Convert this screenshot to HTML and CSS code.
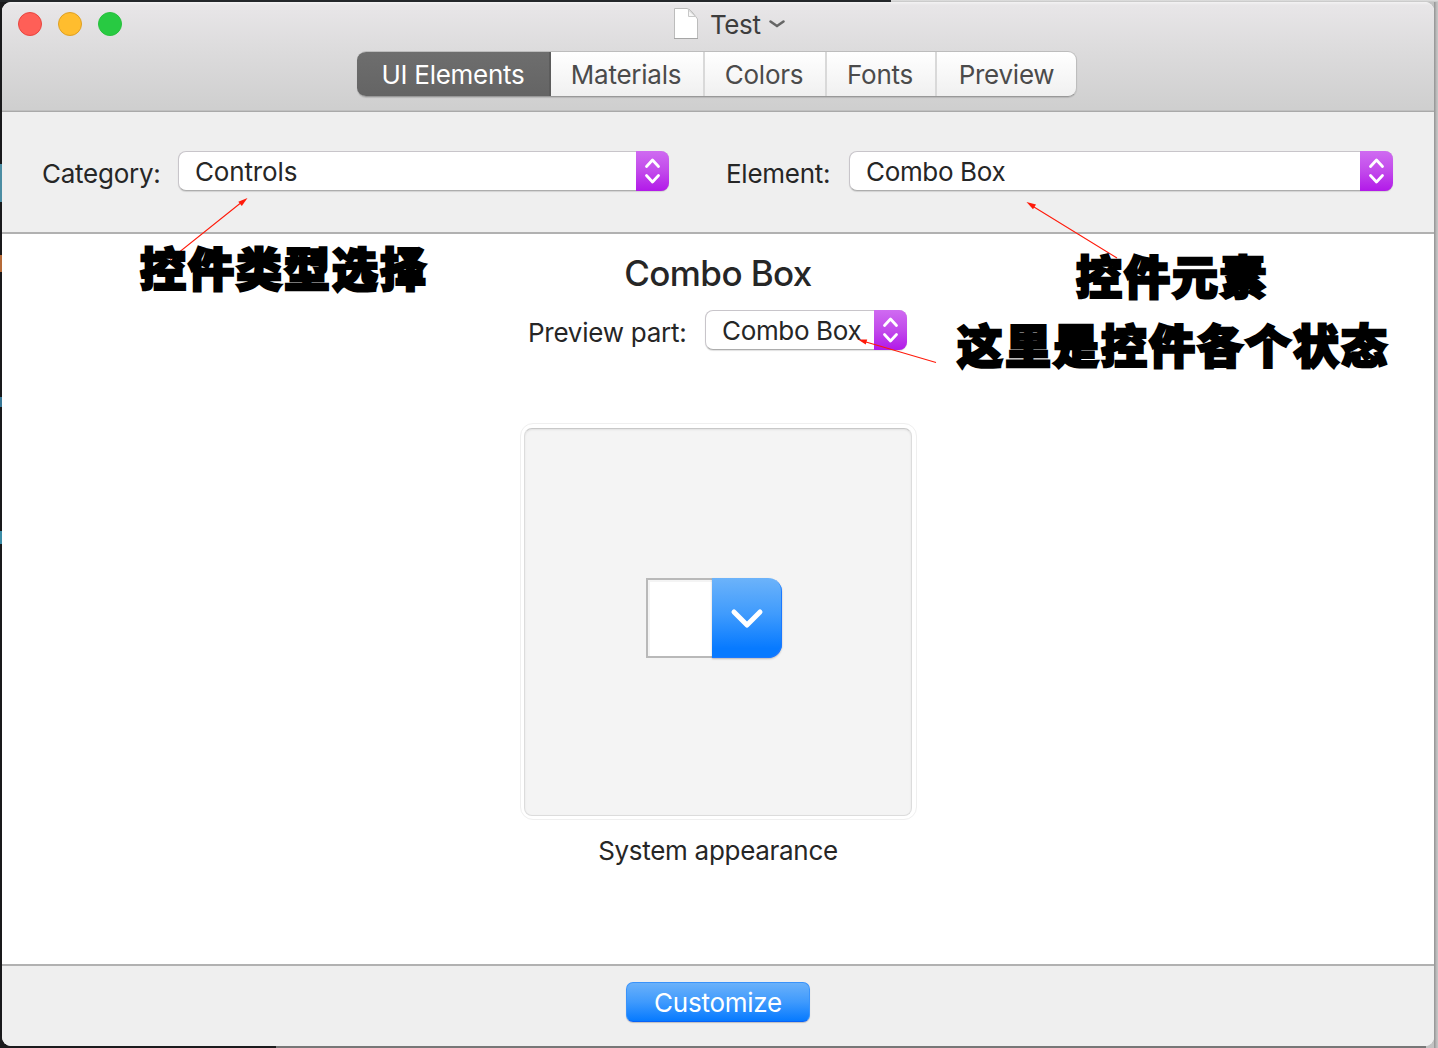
FILE: index.html
```html
<!DOCTYPE html>
<html lang="en">
<head>
<meta charset="utf-8">
<title>Test</title>
<link rel="stylesheet" href="styles.css">
</head>
<body>
<div class="window">
  <header class="toolbar">
    <div class="titlebar">
      <div class="lights"><i class="light close"></i><i class="light minimize"></i><i class="light zoom"></i></div>
      <div class="title">
        <svg class="doc" width="26" height="33" viewBox="0 0 26 33"><path d="M1.500 1.500H14Q17 2 20 6T24.500 12V31.500H1.500Z" fill="#fff" stroke="#bcbcbc"/><path d="M15.500 3V9.500H22.500Z" fill="#f6f6f6" stroke="#c8c8c8"/><path d="M1 31.500H25" stroke="#a6a6a6"/></svg>
        <span class="title-text">Test</span>
        <svg class="title-chevron" width="18" height="10" viewBox="0 0 18 10"><path d="M2.500 2.500L9 7L15.500 2.500" fill="none" stroke="#666" stroke-width="2.600" stroke-linecap="round"/></svg>
      </div>
    </div>
    <nav class="segments">
      <span class="segment selected"><b>UI Elements</b></span>
      <span class="segment materials"><b>Materials</b></span>
      <span class="segment colors"><b>Colors</b></span>
      <span class="segment fonts"><b>Fonts</b></span>
      <span class="segment preview"><b>Preview</b></span>
    </nav>
  </header>

  <section class="filters">
    <span class="label category-label">Category:</span>
    <div class="popup category"><span class="value controls">Controls</span><span class="stepper"><svg width="33" height="40" viewBox="0 0 33 40"><path d="M10.500 15.500L16.500 9L22.500 15.500M10.500 24.500L16.500 31L22.500 24.500"/></svg></span></div>
    <span class="label element-label">Element:</span>
    <div class="popup element"><span class="value">Combo Box</span><span class="stepper"><svg width="33" height="40" viewBox="0 0 33 40"><path d="M10.500 15.500L16.500 9L22.500 15.500M10.500 24.500L16.500 31L22.500 24.500"/></svg></span></div>
  </section>

  <main class="content">
    <h1 class="heading">Combo Box</h1>
    <div class="part-row">
      <span class="label part-label">Preview part:</span>
      <div class="popup part"><span class="value">Combo Box</span><span class="stepper"><svg width="33" height="40" viewBox="0 0 33 40"><path d="M10.500 15.500L16.500 9L22.500 15.500M10.500 24.500L16.500 31L22.500 24.500"/></svg></span></div>
    </div>
    <div class="well-frame">
      <div class="well">
        <div class="combo"><div class="combo-field"></div><div class="combo-button"><svg width="70" height="80" viewBox="0 0 70 80"><path d="M22 34L35 47L48 34" fill="none" stroke="#fff" stroke-width="5" stroke-linecap="round" stroke-linejoin="round"/></svg></div></div>
      </div>
    </div>
    <p class="caption">System appearance</p>
  </main>

  <footer class="footer"><button class="customize">Customize</button></footer>
</div>

<svg class="arrows" width="1438" height="1048" viewBox="0 0 1438 1048">
  <g stroke="#ff1a0a" stroke-width="1.100"><path d="M170 259.500L240 203.500M1117 258L1034 207M936 362.500L866 342"/></g>
  <g fill="#ff1a0a"><path d="M247.500 198L241.800 206L238.300 201.800Z"/><path d="M1026.500 202L1036 204.500L1033 209.300Z"/><path d="M858 339.500L867.200 339.500L865.700 344.500Z"/></g>
</svg>
<div class="note note-category" lang="zh">控件类型选择</div>
<div class="note note-element" lang="zh">控件元素</div>
<div class="note note-state" lang="zh">这里是控件各个状态</div>
</body>
</html>
```
FILE: styles.css
```css
* { box-sizing: border-box; }
body {
  margin: 0;
  padding: 2px 4px 2px 2px;
  width: 1438px;
  height: 1048px;
  overflow: hidden;
  position: relative;
  font-family: Inter, "Liberation Sans", sans-serif;
  font-size: 26px;
  letter-spacing: -0.260px;
  color: #262626;
  background:
    linear-gradient(#24272a, #24272a) 0 0 / 891px 2px no-repeat,
    linear-gradient(#e2e2e2, #c4c4c4) 891px 0 / 547px 2px no-repeat,
    linear-gradient(#1b1b1d, #1b1b1d) 0 1036px / 276px 12px no-repeat,
    linear-gradient(#777, #777) 276px 1046px / 1150px 2px no-repeat,
    linear-gradient(transparent 164px, #4c8da3 164px 202px, transparent 202px 255px, #b56a38 255px 272px, transparent 272px 397px, #377795 397px 407px, transparent 407px 531px, #3b8ca6 531px 544px, transparent 544px) 0 0 / 2px 1048px no-repeat,
    linear-gradient(#19191b, #19191b) 0 0 / 20px 1048px no-repeat,
    linear-gradient(90deg, #929292, #c3c3c3 3px) 1434px 0 / 4px 1048px no-repeat,
    #c3c3c3;
}
.window {
  width: 1432px;
  height: 1044px;
  border-radius: 9px;
  overflow: hidden;
  display: flex;
  flex-direction: column;
  background: #fff;
}
.toolbar {
  height: 110px;
  background: linear-gradient(#f4f3f4, #e8e6e8 3px, #dcdbdc 50px, #cfcfcf 106px);
  border-bottom: 1px solid #a9a9a9;
  box-shadow: inset 0 -1px #c0c0c0;
}
.titlebar { height: 49px; display: flex; align-items: flex-start; padding: 10px 0 0 16px; }
.lights { display: flex; gap: 16px; width: 104px; }
.light { width: 24px; height: 24px; border-radius: 50%; border: 1px solid; }
.close { background: #ff5f57; border-color: #e9453f; }
.minimize { background: #ffbd2e; border-color: #dfa023; }
.zoom { background: #28ca42; border-color: #27c13c; }
.title { display: flex; align-items: center; margin: -5px 0 0 551px; height: 34px; }
.doc { margin-top: -2px; }
.title-text { width: 58px; margin-left: 11px; color: #3d3d3d; letter-spacing: -0.400px; line-height: 34px; padding-top: 1px; }
.segments {
  display: flex;
  width: 720px;
  height: 46px;
  margin-left: 355px;
  border: 1px solid #bdbdbd;
  border-bottom-color: #999;
  border-left: 0;
  border-radius: 9px;
  overflow: hidden;
  background: linear-gradient(#fff, #f0f0f0);
  box-shadow: 0 1px 1px rgba(0,0,0,.12);
}
.segment { display: flex; align-items: center; justify-content: center; border-left: 2px solid #d9d9d9; color: #4b4b4b; }
.segment b { font-weight: 420; white-space: nowrap; letter-spacing: -0.260px; }
.materials b, .colors b, .fonts b { margin-right: 2px; }
.selected { width: 194px; margin: -1px 0; border-right: 2px solid #5c5c5c; border-left: 0; background: linear-gradient(#6e6e6e, #646464); color: #fff; }
.materials { width: 152px; border-left: 0; }
.colors { width: 122px; }
.fonts { width: 110px; }
.preview { flex: 1; }

.filters { height: 122px; display: flex; padding: 39px 41px 0 40px; background: #efefef; border-bottom: 2px solid #b1b1b1; }
.label { line-height: 40px; margin-top: 3px; white-space: nowrap; }
.category-label { width: 136px; }
.element-label { width: 123px; margin-left: 57px; }
.popup {
  height: 40px;
  display: flex;
  justify-content: space-between;
  background: #fff;
  border: 1px solid #c8c5ca;
  border-bottom: 1px solid #adadad;
  border-radius: 8px;
  box-shadow: 0 1px 1px rgba(0,0,0,.12);
}
.value { padding-left: 16px; line-height: 40px; white-space: nowrap; letter-spacing: -0.350px; }
.controls { letter-spacing: -0.150px; }
.stepper { display: block; height: 40px; width: 33px; margin: -1px -1px 0 0; border-radius: 0 8px 8px 0; background: linear-gradient(#cf6bf1, #c24aeb 50%, #b219e9); }
.stepper svg { display: block; }
.stepper path { fill: none; stroke: #fff; stroke-width: 2.800; stroke-linecap: round; stroke-linejoin: round; }
.category { width: 491px; }
.element { width: 544px; }

.content { height: 730px; display: flex; flex-direction: column; align-items: center; }
.heading { margin: 18px 0 0; height: 42px; line-height: 42px; font-size: 35px; font-weight: 540; letter-spacing: -0.600px; }
.part-row { display: flex; width: 380px; margin: 16px 0 0 0; }
.part-label { width: 177px; }
.part { width: 202px; }
.well-frame { width: 397px; height: 397px; margin-top: 70px; padding: 4px; border: 1px solid #efefef; border-radius: 13px; flex: none; }
.well { height: 388px; width: 388px; margin-left: -1px; border: 1px solid #dcdcdc; border-top-color: #c8c8c8; border-radius: 8px; background: #f4f4f4; box-shadow: inset 0 1px 2px rgba(0,0,0,.08); display: flex; padding: 149px 0 0 121px; }
.combo { display: flex; height: 80px; }
.combo-field { width: 66px; background: #fff; border: 2px solid #b9b9b9; border-right: 0; box-shadow: inset 2px 2px #f4f4f4; }
.combo-button { width: 70px; border-radius: 0 14px 14px 0; background: linear-gradient(#6cb3fa, #3f9bfd 45%, #077aff 88%); box-shadow: inset -1px -1px #1a78ff, 0 1px 2px rgba(0,0,0,.25); }
.combo-button svg { display: block; }
.caption { margin: 15px 0 0; line-height: 32px; white-space: nowrap; letter-spacing: -0.300px; }

.footer { height: 82px; border-top: 2px solid #b1b1b1; background: #efefef; display: flex; justify-content: center; padding-top: 16px; }
.customize { width: 184px; height: 40px; padding: 0; border: 1px solid #3993fb; border-bottom-color: #0962f6; border-radius: 7px; background: linear-gradient(#6ab1fa, #3f9afd 50%, #067aff); font: inherit; letter-spacing: -0.260px; color: #fff; line-height: 39px; box-shadow: 0 1px 1px rgba(0,0,0,.2); }

.arrows { position: absolute; left: 0; top: 0; }
.note {
  position: absolute;
  font-family: "Noto Sans CJK SC", sans-serif;
  font-weight: 900;
  font-size: 46px;
  letter-spacing: 2px;
  line-height: 60px;
  color: #000;
  white-space: nowrap;
  -webkit-text-stroke: 2.400px #000;
  stroke-linejoin: round;
}
.note-category { left: 140px; top: 236px; }
.note-element { left: 1076px; top: 244px; }
.note-state { left: 957px; top: 313px; }
```
